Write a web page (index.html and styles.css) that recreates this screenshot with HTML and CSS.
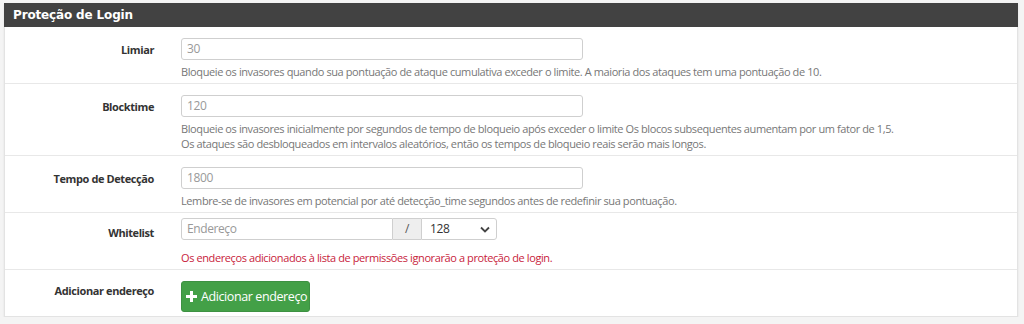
FILE: index.html
```html
<!DOCTYPE html>
<html lang="pt">
<head>
<meta charset="utf-8">
<link rel="stylesheet" href="styles.css">
</head>
<body>
<div class="panel">
  <div class="panel-heading">Proteção de Login</div>
  <div class="panel-body">
    <div class="row">
      <div class="label">Limiar</div>
      <div class="field">
        <div class="input">30</div>
        <div class="help">Bloqueie os invasores quando sua pontuação de ataque cumulativa exceder o limite. A maioria dos ataques tem uma pontuação de 10.</div>
      </div>
    </div>
    <div class="row">
      <div class="label">Blocktime</div>
      <div class="field">
        <div class="input">120</div>
        <div class="help">Bloqueie os invasores inicialmente por segundos de tempo de bloqueio após exceder o limite Os blocos subsequentes aumentam por um fator de 1,5.<br>Os ataques são desbloqueados em intervalos aleatórios, então os tempos de bloqueio reais serão mais longos.</div>
      </div>
    </div>
    <div class="row">
      <div class="label">Tempo de Detecção</div>
      <div class="field">
        <div class="input">1800</div>
        <div class="help">Lembre-se de invasores em potencial por até detecção_time segundos antes de redefinir sua pontuação.</div>
      </div>
    </div>
    <div class="row row-wl">
      <div class="label">Whitelist</div>
      <div class="field">
        <div class="group">
          <div class="input addr">Endereço</div>
          <div class="addon">/</div>
          <div class="input sel">128
            <svg class="caret" width="10" height="7" viewBox="0 0 10 7"><path d="M1 1.5 L5 5.5 L9 1.5" fill="none" stroke="#444" stroke-width="1.8"/></svg>
          </div>
        </div>
        <div class="help danger">Os endereços adicionados à lista de permissões ignorarão a proteção de login.</div>
      </div>
    </div>
    <div class="row row-btn">
      <div class="label">Adicionar endereço</div>
      <div class="field">
        <div class="btn"><svg width="11" height="11" viewBox="0 0 11 11"><path d="M4 0h3v4h4v3H7v4H4V7H0V4h4z" fill="#fff"/></svg><span>Adicionar endereço</span></div>
      </div>
    </div>
  </div>
</div>
</body>
</html>
```

FILE: styles.css
```css
html, body { margin: 0; padding: 0; }
body {
  background: #f4f4f4;
  font-family: "Open Sans", "Liberation Sans", sans-serif;
  font-size: 11px;
  letter-spacing: -0.4px;
  color: #333;
  padding: 3px 6px 0 4px;
}
.panel {
  background: #fff;
  border: 1px solid #e3e3e3;
  border-top: none;
  box-shadow: 0 1px 2px rgba(0,0,0,0.08);
  width: 1012px;
}
.panel-heading {
  background: #424242;
  color: #fff;
  font-family: "DejaVu Sans", Verdana, sans-serif;
  font-weight: bold;
  font-size: 12px;
  letter-spacing: -0.15px;
  height: 24px;
  line-height: 24px;
  padding-left: 9px;
  margin: 0 -1px;
}
.row {
  display: grid;
  grid-template-columns: 164px 1fr;
  border-bottom: 1px solid #e8e8e8;
  padding: 11px 0 4px;
}
.row:last-child { border-bottom: none; }
.label {
  text-align: right;
  font-weight: bold;
  padding-right: 15px;
  padding-top: 4px;
  line-height: 15px;
}
.field { padding-left: 12px; }
.input {
  box-sizing: border-box;
  width: 402px;
  height: 22px;
  border: 1px solid #cfcfcf;
  border-radius: 3px;
  color: #999;
  font-size: 12px;
  line-height: 20px;
  padding-left: 5px;
}
.help {
  color: #777;
  line-height: 15px;
  margin-top: 4px;
}
.danger { color: #c8233b; margin-top: 10px; }
.row-wl { padding-top: 5px; padding-bottom: 4px; }
.row-wl .label { padding-top: 7px; }
.group { display: flex; }
.addr { width: 212px; border-radius: 3px 0 0 3px; }
.addon {
  box-sizing: border-box;
  width: 28px;
  height: 22px;
  background: #eee;
  border-top: 1px solid #cfcfcf;
  border-bottom: 1px solid #cfcfcf;
  color: #555;
  text-align: center;
  line-height: 20px;
  font-size: 12px;
}
.sel {
  width: 76px;
  border-radius: 0 3px 3px 0;
  color: #333;
  padding-left: 8px;
  display: flex;
  align-items: center;
  justify-content: space-between;
  padding-right: 6px;
}
.row-btn { padding-top: 11px; padding-bottom: 4px; }
.row-btn .label { padding-top: 2px; }
.btn {
  display: inline-flex;
  align-items: center;
  gap: 4px;
  box-sizing: border-box;
  width: 129px;
  height: 31px;
  background: #43a047;
  border: 1px solid #3d9142;
  border-radius: 3px;
  color: #fff;
  font-size: 12.5px;
  white-space: nowrap;
  padding-left: 4px;
}
```
